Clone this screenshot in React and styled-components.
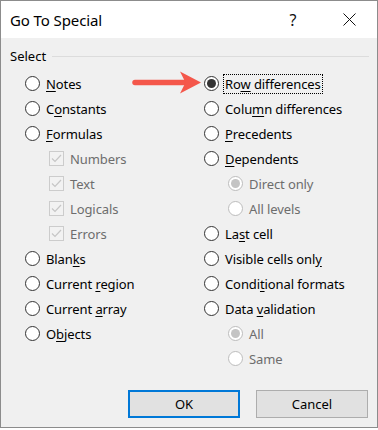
import React from "react";
import styled, { createGlobalStyle } from "styled-components";

const GlobalStyle = createGlobalStyle`
  html, body {
    margin: 0;
    padding: 0;
    background: #fff;
  }
  body {
    font-family: "Noto Sans", "Open Sans", sans-serif;
  }
`;

const Dialog = styled.div`
  width: 378px;
  height: 428px;
  box-sizing: border-box;
  border: 1px solid #8c8c8c;
  background: #f0f0f0;
  display: flex;
  flex-direction: column;
  color: #000;
`;

const TitleBar = styled.div`
  height: 37px;
  background: #fff;
  display: flex;
  align-items: center;
  padding-left: 9px;
`;

const Title = styled.div`
  flex: 1;
  font-size: 15px;
  letter-spacing: -0.1px;
`;

const TitleButton = styled.div`
  width: 56px;
  height: 37px;
  display: flex;
  align-items: center;
  justify-content: center;
  font-size: 16px;
  color: #111;
`;

const Body = styled.div`
  position: relative;
  flex: 1;
  display: flex;
  flex-direction: column;
  padding: 9px;
`;

const GroupHeader = styled.div`
  display: flex;
  align-items: center;
  gap: 6px;
  height: 18px;
  font-size: 13px;
`;

const GroupLine = styled.div`
  flex: 1;
  height: 1px;
  background: #dcdcdc;
  margin-right: -1px;
`;

const Columns = styled.div`
  display: grid;
  grid-template-columns: 179px 1fr;
  padding: 6px 0 0 15px;
`;

const Column = styled.div`
  display: flex;
  flex-direction: column;
`;

const Row = styled.div`
  height: 25px;
  display: flex;
  align-items: center;
  gap: 6px;
  padding-left: ${(p) => (p.$indent ? "24px" : "0")};
  font-size: 13px;
  color: ${(p) => (p.$disabled ? "#6d6d6d" : "#000")};
  letter-spacing: -0.1px;
`;

const Radio = styled.span`
  width: 15px;
  height: 15px;
  box-sizing: border-box;
  border-radius: 50%;
  border: 1px solid ${(p) => (p.$disabled ? "#bcbcbc" : "#333")};
  background: #fff;
  display: flex;
  align-items: center;
  justify-content: center;
  flex-shrink: 0;

  &::after {
    content: "";
    display: ${(p) => (p.$checked ? "block" : "none")};
    width: 9px;
    height: 9px;
    border-radius: 50%;
    background: ${(p) => (p.$disabled ? "#c4c4c4" : "#333")};
  }
`;

const Check = styled.span`
  width: 15px;
  height: 15px;
  box-sizing: border-box;
  border: 1px solid #cccccc;
  background: #f2f2f2;
  display: flex;
  align-items: center;
  justify-content: center;
  flex-shrink: 0;
`;

const Label = styled.span`
  padding: 1px 1px;
  border: 1px dotted ${(p) => (p.$focus ? "#000" : "transparent")};
  margin-left: -2px;
  line-height: 16px;

  u {
    text-underline-offset: 2px;
  }
`;

const Arrow = styled.svg`
  position: absolute;
  left: 128px;
  top: 29px;
`;

const Footer = styled.div`
  margin-top: auto;
  display: flex;
  justify-content: flex-end;
  gap: 16px;
`;

const Button = styled.button`
  width: 112px;
  height: 28px;
  box-sizing: border-box;
  background: #e1e1e1;
  border: ${(p) => (p.$primary ? "2px solid #0078d7" : "1px solid #adadad")};
  font-family: inherit;
  font-size: 13px;
  color: #000;
  padding: 0;
`;

const left = [
  { label: ["", "N", "otes"] },
  { label: ["C", "o", "nstants"] },
  { label: ["", "F", "ormulas"] },
  { label: ["Numbers"], check: true },
  { label: ["Text"], check: true },
  { label: ["Logicals"], check: true },
  { label: ["Errors"], check: true },
  { label: ["Blan", "k", "s"] },
  { label: ["Current ", "r", "egion"] },
  { label: ["Current ", "a", "rray"] },
  { label: ["O", "b", "jects"] },
];

const right = [
  { label: ["Ro", "w", " differences"], checked: true, focus: true },
  { label: ["Colu", "m", "n differences"] },
  { label: ["", "P", "recedents"] },
  { label: ["", "D", "ependents"] },
  { label: ["Direct only"], sub: true, checked: true },
  { label: ["All levels"], sub: true },
  { label: ["La", "s", "t cell"] },
  { label: ["Visible cells onl", "y", ""] },
  { label: ["Condi", "t", "ional formats"] },
  { label: ["Data ", "v", "alidation"] },
  { label: ["All"], sub: true, checked: true },
  { label: ["Same"], sub: true },
];

const CheckMark = () => (
  <svg width="11" height="9" viewBox="0 0 11 9">
    <path d="M1 4.5 L4 7.5 L10 1" fill="none" stroke="#c6c6c6" strokeWidth="1.2" />
  </svg>
);

const Item = ({ item }) => {
  const disabled = item.check || item.sub;
  const [a, key, b] = item.label;
  return (
    <Row $indent={disabled} $disabled={disabled}>
      {item.check ? (
        <Check>
          <CheckMark />
        </Check>
      ) : (
        <Radio $checked={item.checked} $disabled={item.sub} />
      )}
      <Label $focus={item.focus}>
        {a}
        {key && <u>{key}</u>}
        {b}
      </Label>
    </Row>
  );
};

export default function App() {
  return (
    <>
      <GlobalStyle />
      <Dialog>
        <TitleBar>
          <Title>Go To Special</Title>
          <TitleButton>?</TitleButton>
          <TitleButton>
            <svg width="13" height="13" viewBox="0 0 13 13">
              <path d="M0.5 0.5 L12.5 12.5 M12.5 0.5 L0.5 12.5" stroke="#111" strokeWidth="1" />
            </svg>
          </TitleButton>
        </TitleBar>
        <Body>
          <GroupHeader>
            Select
            <GroupLine />
          </GroupHeader>
          <Columns>
            <Column>
              {left.map((it, i) => (
                <Item key={i} item={it} />
              ))}
            </Column>
            <Column>
              {right.map((it, i) => (
                <Item key={i} item={it} />
              ))}
            </Column>
          </Columns>
          <Arrow width="76" height="28" viewBox="0 0 76 28">
            <line x1="6" y1="15.5" x2="58" y2="15.5" stroke="#f4574b" strokeWidth="5.5" strokeLinecap="round" />
            <path d="M51 4.5 L72 15.5 L51 26.5 L56.5 15.5 Z" fill="#f4574b" />
          </Arrow>
          <Footer>
            <Button $primary>OK</Button>
            <Button>Cancel</Button>
          </Footer>
        </Body>
      </Dialog>
    </>
  );
}
